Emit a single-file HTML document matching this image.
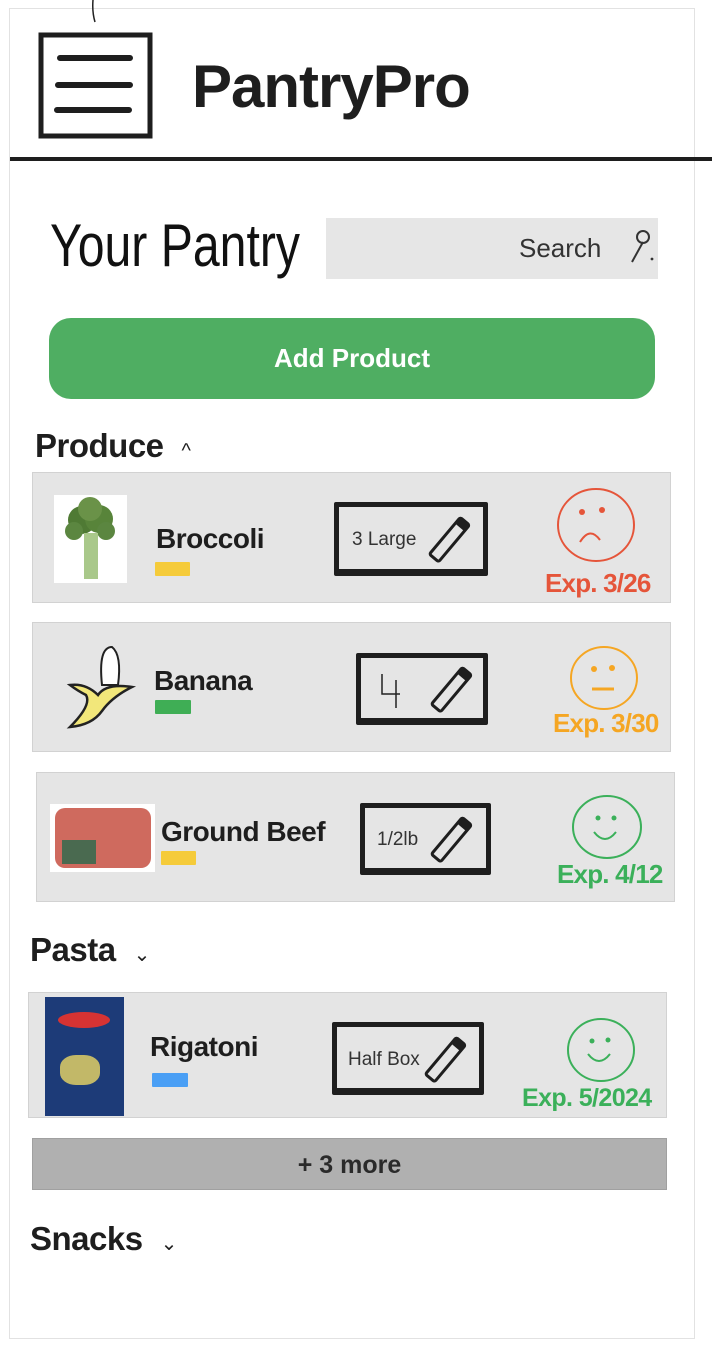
<!DOCTYPE html>
<html><head><meta charset="utf-8"><style>
*{margin:0;padding:0;box-sizing:border-box}
body{width:712px;height:1352px;background:#fff;position:relative;overflow:hidden;font-family:"Liberation Sans",sans-serif;color:#1e1e1e}
.a{position:absolute}
.frame{left:9px;top:8px;width:686px;height:1331px;border:1px solid #e2e2e2}
.card{background:#e5e5e5;border:1px solid #d2d2d2}
.name{font-weight:bold;font-size:28px;letter-spacing:-0.5px}
.tag{height:14px;border-radius:1px}
.qbox{border:5px solid #1e1e1e;border-bottom-width:7px;border-radius:2px}
.qt{font-size:19px;color:#333}
.exp{font-weight:bold;font-size:26px;letter-spacing:-0.8px}
.h{font-weight:bold;font-size:33px;letter-spacing:-0.5px}
.car{font-size:20px;font-weight:normal;margin-left:18px}
</style></head><body>
<div class="a frame"></div>
<svg class="a" style="left:0;top:0" width="712" height="300">
<path d="M93 0 Q92 12 95 22" stroke="#222" stroke-width="1.5" fill="none"/>
<rect x="41" y="35" width="109" height="101" fill="none" stroke="#1e1e1e" stroke-width="5"/>
<path d="M60 58H130M58 85H130M57 110H129" stroke="#1e1e1e" stroke-width="6" stroke-linecap="round"/>
<path d="M10 159H712" stroke="#1e1e1e" stroke-width="4"/>
<text x="50" y="266" font-family="Liberation Sans Narrow, Liberation Sans" font-size="60" fill="#111" textLength="250" lengthAdjust="spacingAndGlyphs">Your Pantry</text>
</svg>
<div class="a" style="left:192px;top:52px;font-size:60px;font-weight:bold;letter-spacing:-1px">PantryPro</div>
<div class="a" style="left:326px;top:218px;width:332px;height:61px;background:#e6e6e6"></div>
<div class="a" style="left:519px;top:233px;font-size:26px;color:#333">Search</div>
<svg class="a" style="left:620px;top:226px" width="40" height="40"><path d="M12 36L23 16" stroke="#333" stroke-width="2"/><circle cx="23" cy="11" r="6" fill="none" stroke="#333" stroke-width="2"/><circle cx="32" cy="33" r="1.4" fill="#333"/></svg>
<div class="a" style="left:49px;top:318px;width:606px;height:81px;background:#4fae62;border-radius:22px;color:#fff;font-weight:bold;font-size:26px;text-align:center;line-height:81px">Add Product</div>
<div class="a h" style="left:35px;top:427px">Produce<span class="car">^</span></div>

<!-- card 1 -->
<div class="a card" style="left:32px;top:472px;width:639px;height:131px"></div>
<div class="a" style="left:54px;top:495px;width:73px;height:88px;background:#fff"></div>
<svg class="a" style="left:54px;top:495px" width="73" height="88"><circle cx="28" cy="25" r="14" fill="#4f7a34"/><circle cx="45" cy="24" r="14" fill="#58843a"/><circle cx="36" cy="14" r="12" fill="#6a9248"/><circle cx="20" cy="36" r="9" fill="#5b8640"/><circle cx="52" cy="36" r="9" fill="#5b8640"/><rect x="30" y="38" width="14" height="46" fill="#a9c88a"/></svg>
<div class="a name" style="left:156px;top:523px">Broccoli</div>
<div class="a tag" style="left:155px;top:562px;width:35px;background:#f5cb3a"></div>
<div class="a qbox" style="left:334px;top:502px;width:154px;height:74px"></div>
<div class="a qt" style="left:352px;top:529px">3 Large</div>
<svg class="a" style="left:428px;top:512px" width="50" height="52"><g transform="translate(6,46) rotate(-50)"><rect x="0" y="-6" width="48" height="12" rx="2" fill="none" stroke="#1e1e1e" stroke-width="3"/><rect x="40" y="-6" width="8" height="12" fill="#1e1e1e"/></g></svg>
<svg class="a" style="left:556px;top:486px" width="82" height="80"><ellipse cx="40" cy="39" rx="38" ry="36" fill="none" stroke="#e5553a" stroke-width="2"/><circle cx="26" cy="26" r="3" fill="#e5553a"/><circle cx="46" cy="24" r="3" fill="#e5553a"/><path d="M24 56Q34 40 44 54" fill="none" stroke="#e5553a" stroke-width="2"/></svg>
<div class="a exp" style="left:545px;top:568px;color:#e5553a">Exp. 3/26</div>

<!-- card 2 -->
<div class="a card" style="left:32px;top:622px;width:639px;height:130px"></div>
<svg class="a" style="left:62px;top:645px" width="80" height="86"><path d="M40 40Q36 2 50 2Q60 10 56 40Z" fill="#fff" stroke="#222" stroke-width="2"/><path d="M8 40Q24 38 36 50Q44 38 70 42Q50 52 40 66Q30 80 8 82Q30 60 24 50Q16 46 8 40Z" fill="#f2e77a" stroke="#222" stroke-width="2.5"/></svg>
<div class="a name" style="left:154px;top:665px">Banana</div>
<div class="a tag" style="left:155px;top:700px;width:36px;background:#3fae55"></div>
<div class="a qbox" style="left:356px;top:653px;width:132px;height:72px"></div>
<svg class="a" style="left:376px;top:672px" width="30" height="38"><path d="M6 2V22H24M20 8V36" fill="none" stroke="#222" stroke-width="1.5"/></svg>
<svg class="a" style="left:430px;top:662px" width="50" height="52"><g transform="translate(6,46) rotate(-50)"><rect x="0" y="-6" width="48" height="12" rx="2" fill="none" stroke="#1e1e1e" stroke-width="3"/><rect x="40" y="-6" width="8" height="12" fill="#1e1e1e"/></g></svg>
<svg class="a" style="left:568px;top:644px" width="72" height="70"><ellipse cx="36" cy="34" rx="33" ry="31" fill="none" stroke="#f5a623" stroke-width="2"/><circle cx="26" cy="25" r="3" fill="#f5a623"/><circle cx="44" cy="24" r="3" fill="#f5a623"/><path d="M24 45H46" stroke="#f5a623" stroke-width="3"/></svg>
<div class="a exp" style="left:553px;top:708px;color:#f5a623">Exp. 3/30</div>

<!-- card 3 -->
<div class="a card" style="left:36px;top:772px;width:639px;height:130px"></div>
<div class="a" style="left:50px;top:804px;width:105px;height:68px;background:#fff"></div>
<div class="a" style="left:55px;top:808px;width:96px;height:60px;background:#cf6a5e;border-radius:10px"></div>
<div class="a" style="left:62px;top:840px;width:34px;height:24px;background:#4a6a50"></div>
<div class="a name" style="left:161px;top:816px">Ground Beef</div>
<div class="a tag" style="left:161px;top:851px;width:35px;background:#f5cb3a"></div>
<div class="a qbox" style="left:360px;top:803px;width:131px;height:72px"></div>
<div class="a qt" style="left:377px;top:829px">1/2lb</div>
<svg class="a" style="left:430px;top:812px" width="50" height="52"><g transform="translate(6,46) rotate(-50)"><rect x="0" y="-6" width="48" height="12" rx="2" fill="none" stroke="#1e1e1e" stroke-width="3"/><rect x="40" y="-6" width="8" height="12" fill="#1e1e1e"/></g></svg>
<svg class="a" style="left:570px;top:794px" width="74" height="70"><ellipse cx="37" cy="33" rx="34" ry="31" fill="none" stroke="#3bb05a" stroke-width="2"/><circle cx="28" cy="24" r="2.5" fill="#3bb05a"/><circle cx="44" cy="24" r="2.5" fill="#3bb05a"/><path d="M24 38Q35 52 46 38" fill="none" stroke="#3bb05a" stroke-width="2"/></svg>
<div class="a exp" style="left:557px;top:859px;color:#3bb05a">Exp. 4/12</div>

<div class="a h" style="left:30px;top:931px">Pasta<span class="car">&#8964;</span></div>

<!-- card 4 -->
<div class="a card" style="left:28px;top:992px;width:639px;height:126px"></div>
<div class="a" style="left:45px;top:997px;width:79px;height:119px;background:#1d3b78"></div>
<div class="a" style="left:58px;top:1012px;width:52px;height:16px;background:#d63333;border-radius:50%"></div>
<div class="a" style="left:60px;top:1055px;width:40px;height:30px;background:#c2b868;border-radius:40%"></div>
<div class="a name" style="left:150px;top:1031px">Rigatoni</div>
<div class="a tag" style="left:152px;top:1073px;width:36px;background:#4a9ff5"></div>
<div class="a qbox" style="left:332px;top:1022px;width:152px;height:73px"></div>
<div class="a qt" style="left:348px;top:1049px">Half Box</div>
<svg class="a" style="left:424px;top:1032px" width="50" height="52"><g transform="translate(6,46) rotate(-50)"><rect x="0" y="-6" width="48" height="12" rx="2" fill="none" stroke="#1e1e1e" stroke-width="3"/><rect x="40" y="-6" width="8" height="12" fill="#1e1e1e"/></g></svg>
<svg class="a" style="left:564px;top:1016px" width="74" height="70"><ellipse cx="37" cy="34" rx="33" ry="31" fill="none" stroke="#3bb05a" stroke-width="2"/><circle cx="28" cy="25" r="2.5" fill="#3bb05a"/><circle cx="44" cy="24" r="2.5" fill="#3bb05a"/><path d="M24 38Q35 52 46 38" fill="none" stroke="#3bb05a" stroke-width="2"/></svg>
<div class="a exp" style="left:522px;top:1084px;color:#3bb05a;font-size:25px;letter-spacing:-0.6px">Exp. 5/2024</div>

<div class="a" style="left:32px;top:1138px;width:635px;height:52px;background:#b0b0b0;border:1px solid #a0a0a0;font-weight:bold;font-size:25px;text-align:center;line-height:52px;color:#2a2a2a">+ 3 more</div>

<div class="a h" style="left:30px;top:1220px">Snacks<span class="car">&#8964;</span></div>
</body></html>
